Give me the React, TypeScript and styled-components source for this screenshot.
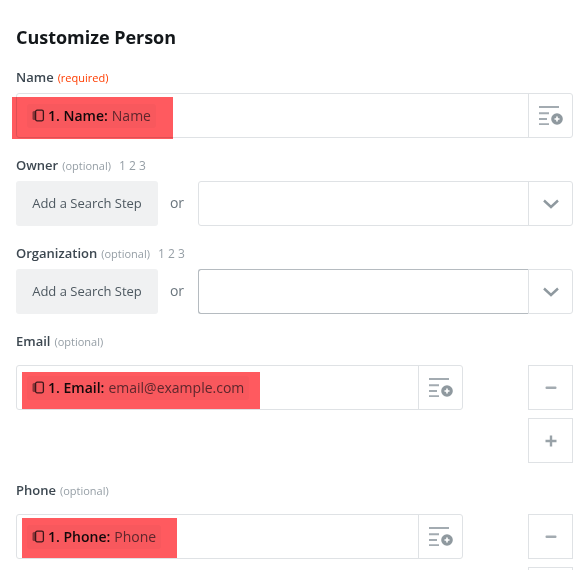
import React from 'react';
import styled, { createGlobalStyle } from 'styled-components';

const GlobalStyle = createGlobalStyle`
  html, body {
    margin: 0;
    height: 570px;
    overflow: hidden;
    background: #fff;
    font-family: 'Open Sans', 'Liberation Sans', sans-serif;
  }
`;

const Page = styled.div`
  box-sizing: border-box;
  width: 579px;
  height: 570px;
  overflow: hidden;
  padding: 27px 6px 0 16px;
`;

const Title = styled.h2`
  margin: 0 0 22px;
  font-size: 18px;
  line-height: 20px;
  font-weight: 700;
  letter-spacing: -0.03px;
  color: #13171a;
`;

const Section = styled.div<{ $gap?: number }>`
  margin-bottom: ${({ $gap }) => $gap ?? 19}px;
`;

const LabelRow = styled.div<{ $gap?: number }>`
  display: flex;
  align-items: baseline;
  height: 16px;
  line-height: 16px;
  margin-bottom: ${({ $gap }) => $gap ?? 8}px;
  font-size: 13px;
  font-weight: 600;
  color: #3c4750;
`;

const Hint = styled.span<{ $required?: boolean }>`
  margin-left: 4px;
  font-size: 11px;
  font-weight: 400;
  color: ${({ $required }) => ($required ? '#ff3d00' : '#959ea5')};
`;

const Steps = styled.span`
  margin-left: 8px;
  font-size: 12px;
  font-weight: 400;
  color: #959ea5;
`;

const Row = styled.div`
  display: flex;
  align-items: flex-start;
`;

const Field = styled.div<{ $width?: number }>`
  position: relative;
  box-sizing: border-box;
  display: flex;
  align-items: center;
  height: 45px;
  width: ${({ $width }) => ($width ? `${$width}px` : '100%')};
  flex: ${({ $width }) => ($width ? '0 0 auto' : '1')};
  border: 1px solid #dfe2e5;
  border-radius: 3px;
  background: #fff;
`;

// a focused input darkens only its own part of the field, not the addon
const FieldBody = styled.div<{ $focused?: boolean }>`
  flex: 1;
  align-self: stretch;
  display: flex;
  align-items: center;
  margin: -1px 0 -1px -1px;
  padding-left: 10px;
  border: 1px solid ${({ $focused }) => ($focused ? '#b5bbc0' : 'transparent')};
  border-right: 0;
  border-radius: 3px 0 0 3px;
`;

const FieldAddon = styled.div`
  flex: 0 0 43px;
  align-self: stretch;
  display: flex;
  align-items: center;
  justify-content: center;
  border-left: 1px solid #dfe2e5;
`;

const Pill = styled.span`
  display: inline-flex;
  align-items: center;
  gap: 3px;
  height: 24px;
  padding: 0 5px;
  border-radius: 3px;
  background: #f8f8f9;
  font-size: 14px;
  white-space: nowrap;
`;

const PillName = styled.b`
  font-weight: 600;
  color: #13171a;
`;

const PillValue = styled.span`
  margin-left: 1px;
  color: #5f6c75;
`;

// the red marker someone painted over the screenshot
const Marker = styled.div<{ $left: number; $top: number; $width: number; $height: number }>`
  position: absolute;
  left: ${({ $left }) => $left}px;
  top: ${({ $top }) => $top}px;
  width: ${({ $width }) => $width}px;
  height: ${({ $height }) => $height}px;
  background: #ff5a5f;
  mix-blend-mode: multiply;
  pointer-events: none;
`;

const SearchButton = styled.button`
  flex: 0 0 142px;
  height: 45px;
  border: 0;
  border-radius: 3px;
  background: #f0f1f2;
  color: #4d5860;
  font-family: inherit;
  font-size: 13px;
  font-weight: 400;
  padding: 0 0 2px;
`;

const Or = styled.span`
  box-sizing: border-box;
  flex: 0 0 40px;
  padding-right: 2px;
  line-height: 43px;
  text-align: center;
  font-size: 14px;
  color: #6b767e;
`;

const SquareButton = styled.button`
  box-sizing: border-box;
  display: flex;
  align-items: center;
  justify-content: center;
  width: 45px;
  height: 45px;
  padding: 0;
  border: 1px solid #dfe2e5;
  background: #fff;
`;

const SideColumn = styled.div`
  margin-left: auto;
  display: flex;
  flex-direction: column;
  gap: 8px;
`;

const ListPlus = () => (
  <svg width="24" height="19" viewBox="0 0 24 19" fill="none">
    <path d="M0 1h20M0 7.3h10M0 13h8M0 18.2h10" stroke="#a3abb1" strokeWidth="2" />
    <circle cx="18" cy="13" r="5.8" fill="#8f999f" />
    <path d="M18 10.5v5M15.5 13h5" stroke="#fff" strokeWidth="1.6" />
  </svg>
);

const Chevron = () => (
  <svg width="16" height="10" viewBox="0 0 16 10" fill="none">
    <path d="M1 1.5 8 8l7-6.5" stroke="#8f999f" strokeWidth="2.4" />
  </svg>
);

const Minus = () => (
  <svg width="12" height="12" viewBox="0 0 12 12">
    <rect x="0.5" y="4.5" width="11" height="2.4" rx="1" fill="#a3abb1" />
  </svg>
);

const Plus = () => (
  <svg width="12" height="12" viewBox="0 0 12 12">
    <path d="M0.5 6h11M6 0.5v11" stroke="#99a2a8" strokeWidth="2.4" />
  </svg>
);

const StepIcon = () => (
  <svg width="13" height="13" viewBox="0 0 13 13" fill="none">
    <rect x="0.5" y="2" width="5" height="9" rx="1.5" fill="#8a8f93" />
    <rect x="3.6" y="1.2" width="7.8" height="10.6" rx="1.5" fill="#f1f2f3" stroke="#3a3f43" strokeWidth="1.3" />
  </svg>
);

const MappedPill = ({ name, value }: { name: string; value: string }) => (
  <Pill>
    <StepIcon />
    <PillName>{name}</PillName>
    <PillValue>{value}</PillValue>
  </Pill>
);

const SearchRow = ({ focused }: { focused?: boolean }) => (
  <Row>
    <SearchButton>Add a Search Step</SearchButton>
    <Or>or</Or>
    <Field>
      <FieldBody $focused={focused} />
      <FieldAddon>
        <Chevron />
      </FieldAddon>
    </Field>
  </Row>
);

const App: React.FC = () => {
  return (
    <>
      <GlobalStyle />
      <Page>
        <Title>Customize Person</Title>

        <Section>
          <LabelRow>
            Name<Hint $required>(required)</Hint>
          </LabelRow>
          <Field>
            <FieldBody>
              <MappedPill name="1. Name:" value="Name" />
            </FieldBody>
            <FieldAddon>
              <ListPlus />
            </FieldAddon>
            <Marker $left={-5} $top={3} $width={161} $height={42} />
          </Field>
        </Section>

        <Section>
          <LabelRow>
            Owner<Hint>(optional)</Hint>
            <Steps>1 2 3</Steps>
          </LabelRow>
          <SearchRow />
        </Section>

        <Section>
          <LabelRow>
            Organization<Hint>(optional)</Hint>
            <Steps>1 2 3</Steps>
          </LabelRow>
          <SearchRow focused />
        </Section>

        <Section>
          <LabelRow $gap={16}>
            Email<Hint>(optional)</Hint>
          </LabelRow>
          <Row>
            <Field $width={447}>
              <FieldBody>
                <MappedPill name="1. Email:" value="email@example.com" />
              </FieldBody>
              <FieldAddon>
                <ListPlus />
              </FieldAddon>
              <Marker $left={5} $top={6} $width={238} $height={37} />
            </Field>
            <SideColumn>
              <SquareButton>
                <Minus />
              </SquareButton>
              <SquareButton>
                <Plus />
              </SquareButton>
            </SideColumn>
          </Row>
        </Section>

        <Section>
          <LabelRow $gap={16}>
            Phone<Hint>(optional)</Hint>
          </LabelRow>
          <Row>
            <Field $width={447}>
              <FieldBody>
                <MappedPill name="1. Phone:" value="Phone" />
              </FieldBody>
              <FieldAddon>
                <ListPlus />
              </FieldAddon>
              <Marker $left={5} $top={3} $width={155} $height={40} />
            </Field>
            <SideColumn>
              <SquareButton>
                <Minus />
              </SquareButton>
              <SquareButton>
                <Plus />
              </SquareButton>
            </SideColumn>
          </Row>
        </Section>
      </Page>
    </>
  );
};

export default App;
